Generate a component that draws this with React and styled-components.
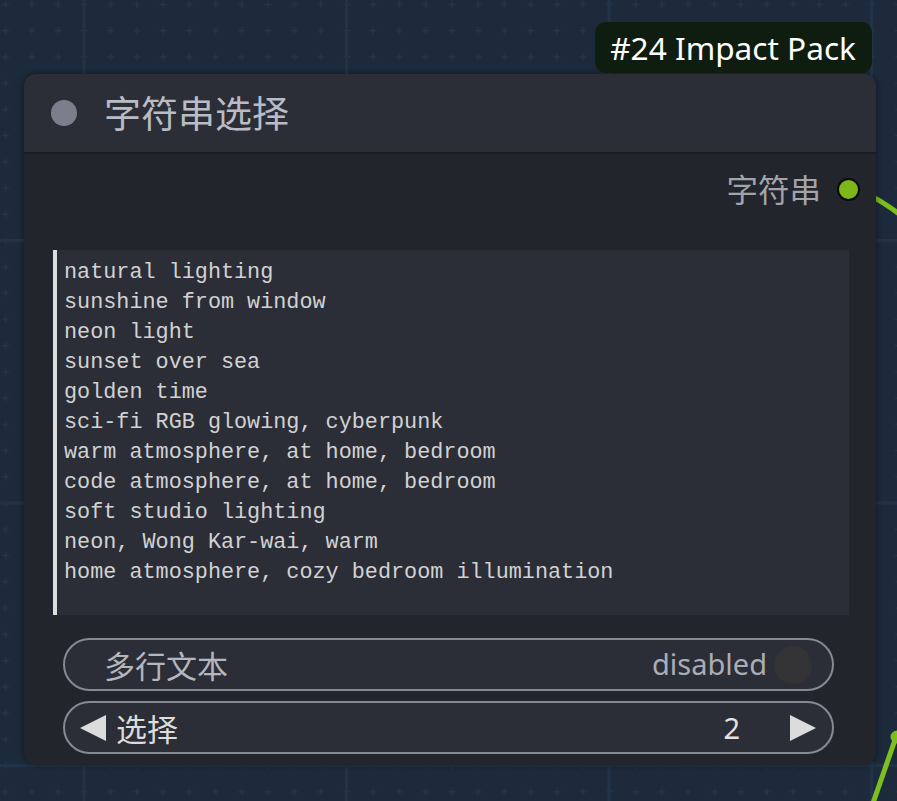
import styled, { createGlobalStyle } from "styled-components";

const GlobalStyle = createGlobalStyle`
	html, body {
		margin: 0;
		padding: 0;
		background: #1c2a3b;
	}
`;

const LINES = [
	"natural lighting",
	"sunshine from window",
	"neon light",
	"sunset over sea",
	"golden time",
	"sci-fi RGB glowing, cyberpunk",
	"warm atmosphere, at home, bedroom",
	"code atmosphere, at home, bedroom",
	"soft studio lighting",
	"neon, Wong Kar-wai, warm",
	"home atmosphere, cozy bedroom illumination",
];

function GridBackground() {
	return (
		<GridSvg width="897" height="801">
			<defs>
				<pattern id="minor" patternUnits="userSpaceOnUse" x="70.875" y="227.375" width="26.25" height="26.25">
					<rect x="10" y="12.6" width="7" height="1.2" fill="#25354a" />
					<rect x="12.9" y="9.8" width="1.2" height="7" fill="#25354a" />
				</pattern>
				<pattern id="major" patternUnits="userSpaceOnUse" x="82.5" y="239" width="262.5" height="262.5">
					<rect x="0" y="0" width="3" height="262.5" fill="#223348" />
					<rect x="0" y="0" width="262.5" height="3" fill="#223348" />
				</pattern>
			</defs>
			<rect width="897" height="801" fill="url(#minor)" />
			<rect width="897" height="801" fill="url(#major)" />
		</GridSvg>
	);
}

function Wires() {
	return (
		<WireSvg width="897" height="801">
			<path d="M 848 189 Q 866 189 902 216" stroke="#7dbf1f" strokeWidth="5" fill="none" />
			<path d="M 896 737 L 872 806" stroke="#7dbf1f" strokeWidth="5" fill="none" />
			<circle cx="897" cy="737" r="6.5" fill="#7dbf1f" />
		</WireSvg>
	);
}

function Arrow({ dir }) {
	return (
		<ArrowSvg width="26" height="26" viewBox="0 0 26 26">
			{dir === "left" ? (
				<polygon points="26,0 26,26 0,13" fill="#dcdcdc" />
			) : (
				<polygon points="0,0 0,26 26,13" fill="#dcdcdc" />
			)}
		</ArrowSvg>
	);
}

export default function App() {
	return (
		<Canvas>
			<GlobalStyle />
			<GridBackground />
			<Wires />
			<Node>
				<Badge>#24 Impact Pack</Badge>
				<Header>
					<TitleDot />
					<Title>字符串选择</Title>
				</Header>
				<Body>
					<OutputRow>
						<OutputLabel>字符串</OutputLabel>
						<OutputDot />
					</OutputRow>
					<TextBox>{LINES.join("\n")}</TextBox>
					<Widgets>
						<Pill>
							<PillLabel>多行文本</PillLabel>
							<PillValue>disabled</PillValue>
							<ToggleKnob />
						</Pill>
						<Pill $combo>
							<Arrow dir="left" />
							<ComboLabel>选择</ComboLabel>
							<ComboValue>2</ComboValue>
							<Arrow dir="right" />
						</Pill>
					</Widgets>
				</Body>
			</Node>
		</Canvas>
	);
}

const Canvas = styled.div`
	position: relative;
	width: 897px;
	height: 801px;
	overflow: hidden;
	background: #1c2a3b;
	padding: 74px 0 0 24px;
	box-sizing: border-box;
	font-family: "Noto Sans", "Noto Sans CJK SC", sans-serif;
`;

const GridSvg = styled.svg`
	position: absolute;
	left: 0;
	top: 0;
`;

const WireSvg = styled.svg`
	position: absolute;
	left: 0;
	top: 0;
`;

const Node = styled.div`
	position: relative;
	width: 852px;
	height: 691px;
	background: #22252c;
	border-radius: 12px;
	box-shadow: 0 0 6px rgba(0, 0, 0, 0.45);
	display: flex;
	flex-direction: column;
`;

const Badge = styled.div`
	position: absolute;
	top: -52px;
	right: 4px;
	height: 51px;
	padding: 0 16px 0 15px;
	display: flex;
	align-items: center;
	background: #0f1d10;
	border-radius: 11px;
	color: #ffffff;
	font-family: "Noto Sans", sans-serif;
	font-size: 31.6px;
	box-sizing: border-box;
`;

const Header = styled.div`
	height: 78px;
	display: flex;
	align-items: center;
	padding-left: 27px;
	background: #2b2e36;
	border-radius: 12px 12px 0 0;
	border-bottom: 2px solid #1b1d22;
`;

const TitleDot = styled.div`
	width: 26px;
	height: 26px;
	border-radius: 50%;
	background: #7b7f8c;
	margin-right: 27px;
`;

const Title = styled.div`
	color: #b9bcc4;
	font-family: "Noto Sans CJK SC", sans-serif;
	font-size: 37px;
	line-height: 1;
	margin-top: -2px;
`;

const Body = styled.div`
	display: flex;
	flex-direction: column;
	padding-top: 16px;
`;

const OutputRow = styled.div`
	height: 38px;
	display: flex;
	align-items: center;
	justify-content: flex-end;
	padding-right: 16px;
`;

const OutputLabel = styled.div`
	color: #a3a4aa;
	font-family: "Noto Sans CJK SC", sans-serif;
	font-size: 31.5px;
	line-height: 1;
	margin-right: 16px;
`;

const OutputDot = styled.div`
	width: 19px;
	height: 19px;
	border-radius: 50%;
	background: #7cb81a;
	border: 2px solid #0a0a0a;
`;

const TextBox = styled.div`
	margin: 42px 27px 0 29px;
	height: 365px;
	box-sizing: border-box;
	padding: 8px 7px;
	background: #2b2e37;
	border-left: 4px solid #dcdcdc;
	color: #d2d2d2;
	font-family: "Liberation Mono", monospace;
	font-size: 21.8px;
	line-height: 30px;
	white-space: pre;
	overflow: hidden;
`;

const Widgets = styled.div`
	display: flex;
	flex-direction: column;
	gap: 10px;
	margin: 23px 42px 0 39px;
`;

const Pill = styled.div`
	height: 53px;
	box-sizing: border-box;
	border: 2px solid #868a95;
	border-radius: 27px;
	background: #2b2e37;
	display: flex;
	align-items: center;
	padding: ${(p) => (p.$combo ? "0 16px 0 15px" : "0 20px 0 39px")};
`;

const PillLabel = styled.div`
	flex: 1;
	color: #b4b6bd;
	font-family: "Noto Sans CJK SC", sans-serif;
	font-size: 31px;
	line-height: 1;
`;

const PillValue = styled.div`
	color: #aaadb5;
	font-family: "Noto Sans", sans-serif;
	font-size: 29px;
	line-height: 1;
	margin-right: 7px;
	margin-top: -2px;
`;

const ToggleKnob = styled.div`
	width: 38px;
	height: 38px;
	border-radius: 50%;
	background: #333335;
`;

const ArrowSvg = styled.svg`
	display: block;
	flex-shrink: 0;
`;

const ComboLabel = styled.div`
	flex: 1;
	margin-left: 10px;
	color: #dcdcdc;
	font-family: "Noto Sans CJK SC", sans-serif;
	font-size: 31px;
	line-height: 1;
`;

const ComboValue = styled.div`
	color: #e2e2e2;
	font-family: "Noto Sans", sans-serif;
	font-size: 29px;
	line-height: 1;
	margin-right: 50px;
`;
